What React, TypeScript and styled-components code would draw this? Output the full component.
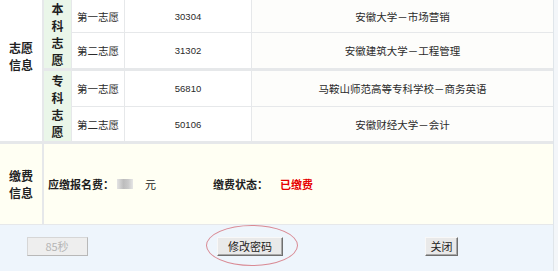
import React from 'react';
import styled, { createGlobalStyle } from 'styled-components';

const GlobalStyle = createGlobalStyle`
  html, body {
    margin: 0;
    padding: 0;
    background: #f3f6f9;
    font-family: "Noto Sans CJK SC", "Liberation Sans", sans-serif;
    color: #222;
  }
`;

const Page = styled.div`
  width: 558px;
  height: 271px;
  overflow: hidden;
  display: flex;
  background: #f3f6f9;
`;

const Sheet = styled.div`
  width: 553px;
  display: flex;
  flex-direction: column;
  background: #e6e8ea;
  border-right: 1px solid #dfe5ea;
`;

const Section = styled.div<{ height: number; gapTop?: number }>`
  display: grid;
  grid-template-columns: 42px 1fr;
  column-gap: 2px;
  height: ${({ height }) => height}px;
  margin-top: ${({ gapTop }) => gapTop || 0}px;
`;

const SideLabel = styled.div<{ bg?: string; top?: number }>`
  background: ${({ bg }) => bg || '#fff'};
  font-size: 12px;
  font-weight: 700;
  line-height: 17px;
  text-align: center;
  display: flex;
  flex-direction: column;
  align-items: center;
  justify-content: ${({ top }) => (top !== undefined ? 'flex-start' : 'center')};
  padding-top: ${({ top }) => top || 0}px;
  box-sizing: border-box;

  & > span {
    display: block;
    height: 17px;
  }
`;

const Groups = styled.div`
  display: flex;
  flex-direction: column;
  gap: 3px;
`;

const Group = styled.div<{ rows: string }>`
  display: grid;
  grid-template-columns: 27px 52px 126px 1fr;
  grid-template-rows: ${({ rows }) => rows};
  gap: 1px;
`;

const VerticalLabel = styled.div`
  grid-row: 1 / 3;
  background: #eaf6e9;
  font-size: 12px;
  font-weight: 700;
  line-height: 17px;
  display: flex;
  flex-direction: column;
  align-items: center;
  justify-content: center;
  color: #1e1e1e;
`;

const Cell = styled.div<{ align?: string; tint?: string }>`
  background: ${({ tint }) => tint || '#fff'};
  display: flex;
  align-items: center;
  justify-content: ${({ align }) => align || 'center'};
  padding-left: ${({ align }) => (align === 'flex-start' ? '5px' : '0')};
  font-size: 10.5px;
  color: #2a2a2a;
  white-space: nowrap;
`;

const Code = styled(Cell)`
  font-family: "Liberation Sans", sans-serif;
  font-size: 9.5px;
`;

const Payment = styled.div`
  background: #fffff3;
  display: flex;
  align-items: center;
  padding-left: 4px;
  font-size: 11px;
`;

const Strong = styled.span<{ gap?: number; red?: boolean }>`
  font-weight: 700;
  margin-left: ${({ gap }) => gap || 0}px;
  color: ${({ red }) => (red ? '#e60000' : '#1e1e1e')};
`;

const Blur = styled.span`
  display: inline-block;
  width: 16px;
  height: 10px;
  margin-left: 3px;
  background: linear-gradient(90deg, #e4e4e4, #bdbdbd 40%, #c9c9c9 70%, #e6e6e6);
  filter: blur(0.6px);
`;

const Unit = styled.span`
  margin-left: 12px;
  font-size: 11px;
`;

const Footer = styled.div`
  flex: 1;
  margin-top: 1px;
  background: #eef5fc;
  display: grid;
  grid-template-columns: 114px 272px 111px;
  align-items: center;
  justify-items: center;
  padding-bottom: 3px;
`;

const Button = styled.button<{ w: number; disabled?: boolean }>`
  position: relative;
  width: ${({ w }) => w}px;
  height: 19px;
  padding: 0;
  font-family: "Noto Sans CJK SC", sans-serif;
  font-size: 11px;
  line-height: 15px;
  background: ${({ disabled }) => (disabled ? '#eeeeee' : '#e9e9e9')};
  color: ${({ disabled }) => (disabled ? '#b5b5b5' : '#222')};
  border: 1px solid;
  border-color: ${({ disabled }) =>
    disabled ? '#d6d6d6 #b8b8b8 #b8b8b8 #d6d6d6' : '#f8f8f8 #6f6f6f #6f6f6f #f8f8f8'};
  box-shadow: ${({ disabled }) => (disabled ? 'none' : 'inset -1px -1px 0 #a9a9a9')};
`;

const Ring = styled.span`
  position: absolute;
  left: -12px;
  top: -13px;
  width: 90px;
  height: 39px;
  border: 1px solid #d98a94;
  border-radius: 50%;
  pointer-events: none;
`;

const Vert = ({ text }: { text: string }) => (
  <VerticalLabel>
    {text.split('').map((c, i) => (
      <span key={i}>{c}</span>
    ))}
  </VerticalLabel>
);

const choices = [
  {
    kind: '本科志愿',
    rows: '32px 35px',
    items: [
      { order: '第一志愿', code: '30304', name: '安徽大学－市场营销' },
      { order: '第二志愿', code: '31302', name: '安徽建筑大学－工程管理' },
    ],
  },
  {
    kind: '专科志愿',
    rows: '35px 34px',
    items: [
      { order: '第一志愿', code: '56810', name: '马鞍山师范高等专科学校－商务英语' },
      { order: '第二志愿', code: '50106', name: '安徽财经大学－会计' },
    ],
  },
];

export default function App() {
  return (
    <Page>
      <GlobalStyle />
      <Sheet>
        <Section height={141}>
          <SideLabel top={39}>
            <span>志愿</span>
            <span>信息</span>
          </SideLabel>
          <Groups>
            {choices.map((g) => (
              <Group key={g.kind} rows={g.rows}>
                <Vert text={g.kind} />
                {g.items.map((it) => (
                  <React.Fragment key={it.code}>
                    <Cell align="flex-start">{it.order}</Cell>
                    <Code>{it.code}</Code>
                    <Cell tint="#fdfdfb">{it.name}</Cell>
                  </React.Fragment>
                ))}
              </Group>
            ))}
          </Groups>
        </Section>
        <Section height={80} gapTop={3}>
          <SideLabel bg="#fffff3">
            <span>缴费</span>
            <span>信息</span>
          </SideLabel>
          <Payment>
            <Strong>应缴报名费：</Strong>
            <Blur />
            <Unit>元</Unit>
            <Strong gap={57}>缴费状态：</Strong>
            <Strong gap={12} red>
              已缴费
            </Strong>
          </Payment>
        </Section>
        <Footer>
          <Button w={61} disabled>
            85秒
          </Button>
          <Button w={66}>
            修改密码
            <Ring />
          </Button>
          <Button w={33}>关闭</Button>
        </Footer>
      </Sheet>
    </Page>
  );
}
